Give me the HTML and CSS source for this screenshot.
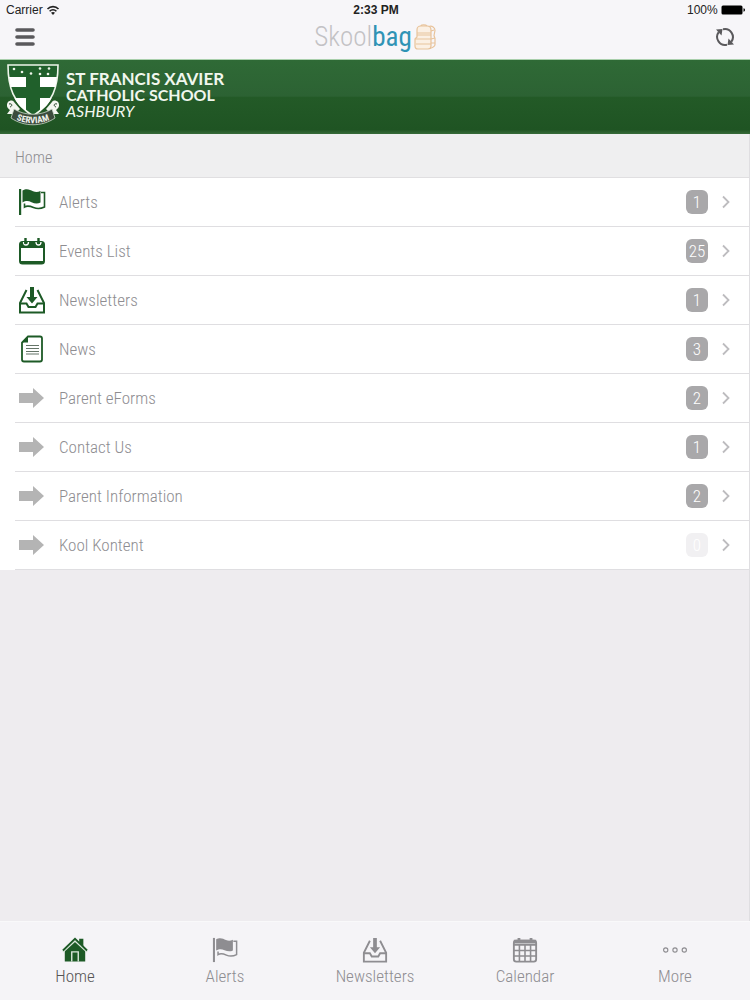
FILE: index.html
```html
<!DOCTYPE html>
<html lang="en">
<head>
  <meta charset="UTF-8">
  <meta name="viewport" content="width=device-width, initial-scale=1.0">
  <title>Skoolbag</title>
  <link rel="stylesheet" href="styles.css">
</head>
<body>

  <!-- shared icons -->
  <svg class="sprite" aria-hidden="true">
    <symbol id="icon-flag" viewBox="0 0 28 28">
      <path d="M1 1h2.200v26H1z" fill="currentColor"/>
      <path d="M4.500 2.500C9 0 12 2 15 3.200s5 .8 7.500-.2v11.500c-3 1.500-6 1-9-.3s-5.500-1.700-9 .3z" fill="currentColor"/>
      <path d="M6.500 15.500V19c3-1.800 6-.8 9 .5s7 1.500 11-.5V4.500h-3.500" fill="none" stroke="currentColor" stroke-width="1.600"/>
    </symbol>
    <symbol id="icon-tray" viewBox="0 0 28 28">
      <path d="M8.500 4L2 17v9.500h24V17L19.500 4" fill="none" stroke="currentColor" stroke-width="2"/>
      <path d="M2 17.500h6.500l2 3.500h7l2-3.500H26" fill="none" stroke="currentColor" stroke-width="2"/>
      <path d="M12 1h4v10h3.500L14 17.500 8.500 11H12z" fill="currentColor"/>
    </symbol>
    <symbol id="icon-arrow" viewBox="0 0 28 28">
      <path d="M1 9h14V4l11 10-11 10v-5H1z" fill="currentColor"/>
    </symbol>
    <symbol id="icon-chevron" viewBox="0 0 8 14">
      <path d="M1 1.500L6.500 7 1 12.500" fill="none" stroke="currentColor" stroke-width="1.800"/>
    </symbol>
  </svg>

  <header class="topbar">
    <div class="status">
      <span class="carrier">Carrier
        <svg width="14" height="10" viewBox="0 0 14 10">
          <path d="M1.500 4c3-3.200 8-3.200 11 0M3.600 6.200c2-2 4.800-2 6.800 0" fill="none" stroke="#222" stroke-width="1.600"/>
          <path d="M5 7.700c1.200-1 2.800-1 4 0L7 10z" fill="#222"/>
        </svg>
      </span>
      <span class="time">2:33 PM</span>
      <span class="power">100%
        <svg width="25" height="10" viewBox="0 0 25 10">
          <rect x=".5" y=".5" width="21" height="9" rx="1.500" fill="#000"/>
          <path d="M22.500 3.300c2 .3 2 3.100 0 3.400z" fill="#000"/>
        </svg>
      </span>
    </div>
    <div class="nav">
      <button class="icon-btn" aria-label="Menu">
        <svg width="20" height="20" viewBox="0 0 20 20">
          <path d="M2 3h16M2 10h16M2 17h16" stroke="#5a595c" stroke-width="3.600" stroke-linecap="round"/>
        </svg>
      </button>
      <div class="logo">
        <span>Skool<b>bag</b></span>
        <svg width="22" height="27" viewBox="0 0 22 27" fill="none" stroke="#e8c39b" stroke-width="1.200" stroke-linejoin="round">
          <path d="M3 6c0-3 1-4 4-4h6c3 0 4 1 4 4v16c0 2-1 3-3 3H4c-2 0-3-1-3-3v-7l2-2z" fill="#fbf0e4"/>
          <path d="M7 2c0-1.500 5-1.500 6 0M15 2.500c3-1 6 1 6 4l-1 5 1 3v6c0 2-2 3-5 4"/>
          <path d="M3 9h14M3 11h14M1 15h16M2 20h15M17 7l3-1M17 15l4-1M17 19h4"/>
        </svg>
      </div>
      <button class="icon-btn" aria-label="Refresh">
        <svg width="20" height="20" viewBox="0 0 20 20" fill="none" stroke="#5a595c" stroke-width="2">
          <path d="M8 2.300a8 8 0 0 1 8.300 12.500M12 17.700A8 8 0 0 1 3.700 5.200"/>
          <path d="M1 2.500l6.500-.5-1 6.500zM19 17.500l-6.500.5 1-6.500z" fill="#5a595c" stroke="none"/>
        </svg>
      </button>
    </div>
  </header>

  <div class="banner">
    <svg class="crest" width="54" height="63" viewBox="0 0 54 63">
      <path d="M2 1h50c0 22-5 38-25 51C7 39 2 23 2 1z" fill="#20602b" stroke="#eef5ea" stroke-width="1.600"/>
      <path d="M3 13h17v10H4.500zM34 13h17l-1.500 10H34zM8.500 34H20v13C14 43 11 39 8.500 34zM34 34h11.500C43 39 40 43 34 47z" fill="#fff"/>
      <g fill="#eef5ea">
        <circle cx="8" cy="5" r="1.300"/><circle cx="16" cy="8" r="1.300"/><circle cx="25" cy="9.500" r="1.300"/>
        <circle cx="34" cy="4.500" r="1.300"/><circle cx="43" cy="4.500" r="1.300"/><circle cx="34" cy="10" r="1.300"/><circle cx="42" cy="10" r="1.300"/>
      </g>
      <path d="M2 38c2-2 5-2 6 0l6 7-5 5H1l3-4c-3-2-4-5-2-8zM52 38c-2-2-5-2-6 0l-6 7 5 5h8l-3-4c3-2 4-5 2-8z" fill="#f3f6f0"/>
      <path d="M3 40c3-1 4 2 1 3M51 40c-3-1-4 2-1 3" fill="none" stroke="#27472c"/>
      <path d="M8 45c11 7 27 7 38 0l3 9c-13 9-31 9-44 0z" fill="#3c4c3d" stroke="#cbd8c9" stroke-width=".8"/>
      <path id="motto" d="M7 54c12 7 28 7 40 0" fill="none"/>
      <text class="motto"><textPath href="#motto" startOffset="50%">SERVIAM</textPath></text>
    </svg>
    <h1 class="school">
      <span>ST FRANCIS XAVIER</span>
      <span class="second">CATHOLIC SCHOOL</span>
      <em>ASHBURY</em>
    </h1>
  </div>

  <main>
    <div class="crumb">Home</div>
    <ul class="list">
      <li><a href="#">
        <svg class="row-icon green"><use href="#icon-flag"/></svg>
        <span class="label">Alerts</span><span class="badge">1</span>
        <svg class="chevron"><use href="#icon-chevron"/></svg>
      </a></li>
      <li><a href="#">
        <svg class="row-icon green" viewBox="0 0 28 28">
          <rect x="2" y="5" width="24" height="21.500" rx="2.500" fill="none" stroke="currentColor" stroke-width="2"/>
          <path d="M2 5h24v6H2zM3 24h22v2H3z" fill="currentColor"/>
          <path d="M5.500 5c0 4 5 4 5 0M18 5c0 4 5 4 5 0" fill="none" stroke="#fff" stroke-width="1.300"/>
          <path d="M7.500 1v6M20.500 1v6" stroke="currentColor" stroke-width="2.400"/>
        </svg>
        <span class="label">Events List</span><span class="badge">25</span>
        <svg class="chevron"><use href="#icon-chevron"/></svg>
      </a></li>
      <li><a href="#">
        <svg class="row-icon green"><use href="#icon-tray"/></svg>
        <span class="label">Newsletters</span><span class="badge">1</span>
        <svg class="chevron"><use href="#icon-chevron"/></svg>
      </a></li>
      <li><a href="#">
        <svg class="row-icon green" viewBox="0 0 28 28">
          <path d="M10 1.500h12c1.500 0 2 .5 2 2v21c0 1.500-.5 2-2 2H6c-1.500 0-2-.5-2-2v-17z" fill="none" stroke="currentColor" stroke-width="1.800"/>
          <path d="M10 1.500v6H4z" fill="currentColor"/>
          <path d="M8 10.500h13M8 13.500h13M8 16.500h13M8 19h13" stroke="#657568" stroke-width="1.200"/>
        </svg>
        <span class="label">News</span><span class="badge">3</span>
        <svg class="chevron"><use href="#icon-chevron"/></svg>
      </a></li>
      <li><a href="#">
        <svg class="row-icon"><use href="#icon-arrow"/></svg>
        <span class="label">Parent eForms</span><span class="badge">2</span>
        <svg class="chevron"><use href="#icon-chevron"/></svg>
      </a></li>
      <li><a href="#">
        <svg class="row-icon"><use href="#icon-arrow"/></svg>
        <span class="label">Contact Us</span><span class="badge">1</span>
        <svg class="chevron"><use href="#icon-chevron"/></svg>
      </a></li>
      <li><a href="#">
        <svg class="row-icon"><use href="#icon-arrow"/></svg>
        <span class="label">Parent Information</span><span class="badge">2</span>
        <svg class="chevron"><use href="#icon-chevron"/></svg>
      </a></li>
      <li><a href="#">
        <svg class="row-icon"><use href="#icon-arrow"/></svg>
        <span class="label">Kool Kontent</span><span class="badge empty">0</span>
        <svg class="chevron"><use href="#icon-chevron"/></svg>
      </a></li>
    </ul>
  </main>

  <nav class="tabs">
    <a href="#" class="active">
      <svg viewBox="0 0 28 28">
        <path d="M18.500 2H23v10h-4.500zM3 14L14 4l11 10v12.500H3z" fill="#1d5a26"/>
        <path d="M1 16L14 4l13 12" fill="none" stroke="#dbe7dc" stroke-width="2"/>
        <path d="M1 14.500L14 2l13 12.500" fill="none" stroke="#1d5a26" stroke-width="2"/>
        <path d="M10.500 26.500V16h7v10.500" fill="none" stroke="#dbe7dc" stroke-width="1.500"/>
      </svg>
      Home
    </a>
    <a href="#">
      <svg><use href="#icon-flag"/></svg>
      Alerts
    </a>
    <a href="#">
      <svg><use href="#icon-tray"/></svg>
      Newsletters
    </a>
    <a href="#">
      <svg viewBox="0 0 28 28">
        <rect x="2" y="4" width="24" height="22.500" rx="2.500" fill="none" stroke="currentColor" stroke-width="2"/>
        <path d="M2 3h24v4H2zM6 1h3v3H6zM19 1h3v3h-3z" fill="currentColor"/>
        <path d="M2 8.500h24M2 14.500h24M2 20.500h24M8 8.500v18M14 8.500v18M20 8.500v18" stroke="currentColor" stroke-width="1.700"/>
      </svg>
      Calendar
    </a>
    <a href="#">
      <svg viewBox="0 0 28 28">
        <g fill="none" stroke="currentColor" stroke-width="1.200">
          <circle cx="4" cy="14" r="2.300"/><circle cx="14" cy="14" r="2.300"/><circle cx="24" cy="14" r="2.300"/>
        </g>
      </svg>
      More
    </a>
  </nav>

</body>
</html>
```
FILE: styles.css
```css
* {
  box-sizing: border-box;
}

body {
  margin: 0;
  min-height: 100vh;
  display: flex;
  flex-direction: column;
  font-family: "Roboto Condensed", "Liberation Sans Narrow", Roboto, sans-serif;
  font-weight: 300;
  font-size: 17px;
  line-height: 20px;
  background-color: #eeecef;
  color: #8e8d91;
}

a {
  color: inherit;
  text-decoration: none;
}

.sprite {
  display: none;
}

/* top bar */
.topbar {
  height: 60px;
  background-color: #f7f6f9;
  border-bottom: 1px solid #a9cfac;
}

.status {
  display: grid;
  grid-template-columns: 1fr auto 1fr;
  height: 20px;
  padding: 0 4px 0 6px;
  font: 12px/20px "Liberation Sans", sans-serif;
  color: #222;
}

.status svg {
  vertical-align: -1px;
}

.time {
  font-weight: bold;
}

.power {
  text-align: right;
}

.nav {
  display: flex;
  justify-content: space-between;
  align-items: center;
  height: 34px;
  padding: 0 15px;
}

.icon-btn {
  display: flex;
  padding: 0;
  border: none;
  background: none;
  cursor: pointer;
}

.logo {
  display: flex;
  align-items: center;
  gap: 2px;
  font-size: 27px;
  line-height: 34px;
  color: #c3c2c5;
}

.logo b {
  font-weight: 400;
  color: #2f93b5;
}

/* school banner */
.banner {
  display: flex;
  align-items: center;
  gap: 6px;
  height: 74px;
  padding: 0 6px 4px;
  background: linear-gradient(to bottom, #2f6a36, #2c6233 49%, #235a27 50%, #1f5423 94%, #376b39);
}

.school {
  margin: 0;
  font: bold 17px/16px Lato, sans-serif;
  color: #f1f7ee;
}

.school span,
.school em {
  display: block;
}

.school .second {
  font-size: 16px;
}

.school em {
  font-size: 16px;
  font-weight: 400;
}

.motto {
  font: bold 9px "Roboto Condensed", "Liberation Sans Narrow", sans-serif;
  fill: #eef3ec;
  text-anchor: middle;
}

/* content */
main {
  flex: 1;
  border-right: 1px solid #dfdee1;
}

.crumb {
  height: 44px;
  padding: 14px 15px 0;
  font-size: 16px;
  background-color: #efeff0;
  border-bottom: 1px solid #e0dfe1;
}

.list {
  margin: 0;
  padding: 0 0 0 15px;
  list-style: none;
  background-color: #fff;
}

.list li {
  border-bottom: 1px solid #dfdee1;
}

.list a {
  display: flex;
  align-items: center;
  height: 48px;
  padding: 0 19px 0 3px;
}

.row-icon {
  width: 28px;
  height: 28px;
  color: #b4b4b4;
}

.green {
  color: #1d5a26;
}

.label {
  flex: 1;
  padding-left: 13px;
}

.badge {
  width: 22px;
  height: 24px;
  margin-right: 14px;
  border-radius: 6px;
  background-color: #a9a8aa;
  color: #fff;
  line-height: 24px;
  text-align: center;
}

.empty {
  background-color: #f1f0f2;
}

.chevron {
  width: 8px;
  height: 14px;
  color: #bdbcbf;
}

/* bottom tabs */
.tabs {
  display: grid;
  grid-template-columns: repeat(5, 1fr);
  height: 79px;
  padding-top: 15px;
  background-color: #f5f4f7;
  border-top: 1px solid #f9f9fa;
}

.tabs a {
  display: flex;
  flex-direction: column;
  align-items: center;
  gap: 3px;
}

.tabs svg {
  width: 26px;
  height: 26px;
}

.tabs .active {
  color: #555;
}
```
